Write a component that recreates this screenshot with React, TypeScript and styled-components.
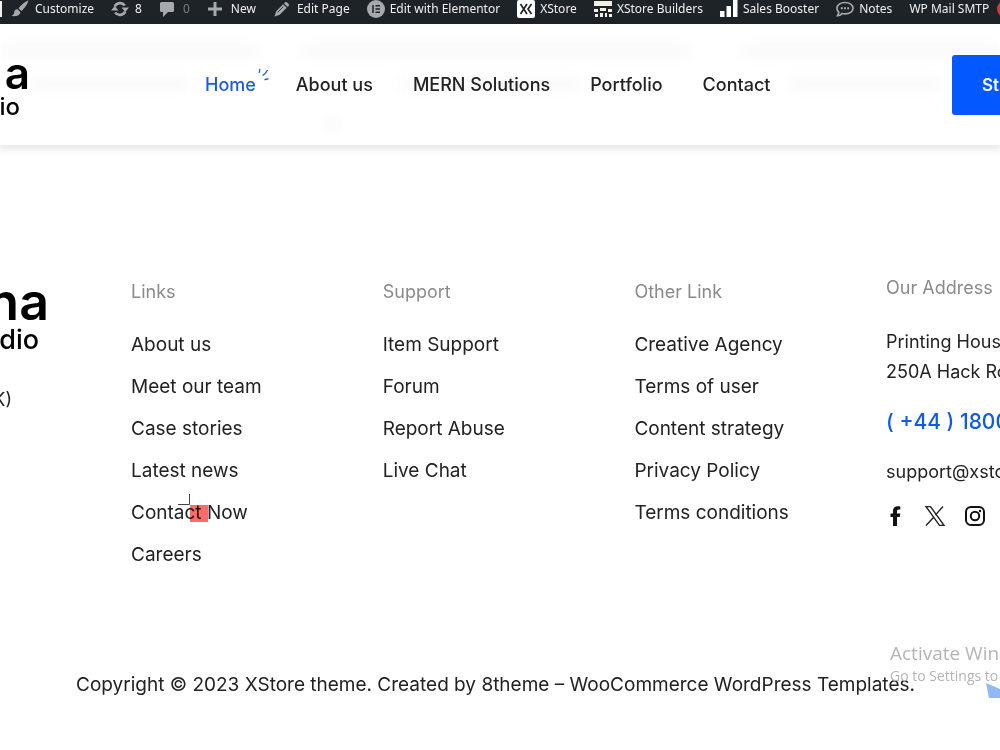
import React from 'react';
import styled, { createGlobalStyle } from 'styled-components';

const Global = createGlobalStyle`
  * { box-sizing: border-box; }
  body { margin: 0; background: #fff; color: #222; font-family: Inter, "Liberation Sans", sans-serif; font-size: 18px; overflow-x: hidden; }
  a { color: inherit; text-decoration: none; }
  ul { list-style: none; margin: 0; padding: 0; }
  h2, p { margin: 0; font-weight: 400; }
`;

const Page = styled.div`
  position: relative;
  overflow: hidden;
  min-height: 100vh;
  display: flex;
  flex-direction: column;
`;

const AdminBar = styled.nav`
  display: flex;
  align-items: center;
  gap: 17px;
  height: 24px;
  padding-bottom: 7px;
  background: #1d2327;
  color: #f0f0f1;
  font: 12px/16px "Noto Sans", "Open Sans", sans-serif;
  white-space: nowrap;
`;

const AdminEdge = styled.span`
  flex: none;
  width: 2px;
  height: 16px;
  margin-right: -8px;
  background: #f0f0f1;
`;

const AdminItem = styled.a<{ $gap?: number; $muted?: boolean }>`
  flex: none;
  display: flex;
  align-items: center;
  gap: ${p => p.$gap ?? 6}px;
  svg { display: block; color: #a7aaad; }
  span { color: ${p => (p.$muted ? '#787c80' : '#f0f0f1')}; }
`;

const Badge = styled.i`
  flex: none;
  width: 18px;
  height: 18px;
  margin-left: -9px;
  border-radius: 9px;
  background: #d63638;
`;

const Header = styled.header`
  position: relative;
  display: flex;
  align-items: center;
  height: 121px;
  background: #fff;
  box-shadow: 0 2px 8px 2px rgba(0, 0, 0, 0.1);
`;

const Ghost = styled.div`
  position: absolute;
  inset: 0;
  overflow: hidden;
  filter: blur(6px);
`;

const GhostBar = styled.i<{ $x: number; $y: number; $w: number }>`
  position: absolute;
  left: ${p => p.$x}%;
  top: ${p => p.$y}px;
  width: ${p => p.$w}%;
  height: 12px;
  background: #f9f9f9;
`;

const Brand = styled.a<{ $width: number; $large?: boolean }>`
  position: relative;
  flex: none;
  display: flex;
  flex-direction: column;
  align-items: flex-end;
  width: ${p => p.$width}px;
  padding-top: ${p => (p.$large ? 0 : 8)}px;
  color: #000;
  font-size: ${p => (p.$large ? 52 : 44)}px;
  line-height: ${p => (p.$large ? 44 : 36)}px;
  font-weight: 600;
  small {
    padding-right: 10px;
    font-size: ${p => (p.$large ? 27 : 24)}px;
    line-height: 32px;
    font-weight: 500;
  }
`;

const Menu = styled.nav`
  position: relative;
  display: flex;
  gap: 40px;
  margin-left: 175px;
  font-size: 18px;
  line-height: 24px;
  font-weight: 500;
  white-space: nowrap;
`;

const MenuLink = styled.a<{ $active?: boolean }>`
  position: relative;
  color: ${p => (p.$active ? '#1a5ce6' : '#222')};
  svg { position: absolute; left: 100%; top: -5px; margin-left: 2px; }
`;

const Cta = styled.button`
  position: relative;
  flex: none;
  margin-left: auto;
  margin-right: -122px;
  width: 170px;
  height: 60px;
  padding: 0 30px;
  border: 0;
  border-radius: 3px;
  background: #0359ff;
  color: #fff;
  font: 600 17px/24px Inter, sans-serif;
  text-align: left;
  white-space: nowrap;
`;

const Footer = styled.footer`
  flex: 1;
  padding-top: 131px;
`;

const Columns = styled.div`
  display: grid;
  grid-template-columns: 13.1% repeat(3, 25.17%) 300px;
  white-space: nowrap;
`;

const Intro = styled.div`
  padding-top: 4px;
`;

const IntroText = styled.p`
  display: flex;
  justify-content: flex-end;
  width: 12px;
  margin-top: 29px;
  line-height: 30px;
`;

const Heading = styled.h2<{ $wide?: boolean }>`
  font-size: 18px;
  line-height: 24px;
  margin-bottom: ${p => (p.$wide ? 27 : 20)}px;
  color: #8a8a8a;
`;

const LinkColumn = styled.div`
  padding-top: 4px;
  li { font-size: 19px; line-height: 42px; }
  li a { position: relative; }
`;

const Pointer = styled.svg`
  position: absolute;
  left: 47px;
  top: -7px;
  mix-blend-mode: multiply;
`;

const Address = styled.address`
  font-style: normal;
  line-height: 30px;
`;

const Phone = styled.a`
  display: block;
  margin: 20px 0;
  font-size: 21px;
  line-height: 30px;
  font-weight: 500;
  color: #0d5be8;
`;

const Social = styled.div`
  display: flex;
  gap: 18px;
  padding-top: 18px;
  a { display: block; height: 22px; }
  svg { display: block; }
`;

const Copyright = styled.p`
  margin: 97px 76px 0;
  font-size: 19px;
  line-height: 24px;
  white-space: nowrap;
`;

const Watermark = styled.div`
  position: absolute;
  left: 89%;
  top: 641px;
  color: #b4b4b4;
  white-space: nowrap;
  font: 14px/20px "Open Sans", "Noto Sans", sans-serif;
  strong { display: block; font-size: 19px; line-height: 25px; font-weight: 400; }
`;

const Bird = styled.svg`
  position: absolute;
  right: 0;
  top: 682px;
`;

const BrushIcon = () => (
  <svg width="18" height="18" viewBox="0 0 18 18" fill="currentColor">
    <path d="M17.500 .5C15 1 10 5 7.600 8.400l2.800 2.700C13.700 8.300 17 3 17.500.5zM6.600 9.300C4.200 9 3.300 10.800 3.200 12.500 3.100 14 2 15 .5 15.800c3.500 1 8.300.2 8.900-3.500z" />
  </svg>
);
const UpdateIcon = () => (
  <svg width="18" height="18" viewBox="0 0 18 18" fill="none" stroke="currentColor" strokeWidth="2.600">
    <path d="M3.800 6.500A5.800 5.800 0 0 1 13.800 5.500M14.200 11.500A5.800 5.800 0 0 1 4.200 12.500" />
    <path d="M0 10.500h7.500L3.700 6zM10.500 7.500H18L14.300 12z" fill="currentColor" stroke="none" />
  </svg>
);
const CommentIcon = () => (
  <svg width="16" height="18" viewBox="0 0 16 18" fill="currentColor">
    <path d="M2.500 2h11A1.500 1.500 0 0 1 15 3.500v7a1.500 1.500 0 0 1-1.500 1.500H9l-5 5v-5H2.500A1.500 1.500 0 0 1 1 10.500v-7A1.500 1.500 0 0 1 2.500 2z" />
  </svg>
);
const PlusIcon = () => (
  <svg width="16" height="18" viewBox="0 0 16 18" fill="currentColor"><path d="M6.500 2h3v5.500H15v3H9.500V16h-3v-5.500H1v-3h5.500z" /></svg>
);
const PencilIcon = () => (
  <svg width="18" height="18" viewBox="0 0 18 18" fill="currentColor">
    <path d="M12.200 2.200c1.200-1.200 4.800 2.200 3.600 3.500l-1.100 1.200-3.700-3.500zM10.100 4.300l3.600 3.500-7 7L1.500 16.500l1.700-5.300z" />
    <path d="M4.500 12.500l6-6" stroke="#1d2327" strokeWidth="0.800" />
  </svg>
);
const ElementorIcon = () => (
  <svg width="18" height="18" viewBox="0 0 18 18">
    <circle cx="9" cy="9" r="9" fill="currentColor" />
    <path d="M6 5v8M8.500 5.700H13M8.500 9H13M8.500 12.300H13" stroke="#1d2327" strokeWidth="1.500" />
  </svg>
);
const StoreIcon = () => (
  <svg width="18" height="18" viewBox="0 0 18 18">
    <rect width="18" height="18" rx="2" fill="#fff" />
    <path d="M3.500 4l6.500 10M10 4L3.500 14M14.500 4L11 9l3.500 5" fill="none" stroke="#1d2327" strokeWidth="1.700" />
  </svg>
);
const BuildersIcon = () => (
  <svg width="18" height="18" viewBox="0 0 18 18" fill="#f0f0e4">
    <path d="M0 1h18v5H0zM0 9h4v3H0zM6 8h6v3H6zM14 9h4v3h-4zM1 14h3v3H1zM6 13h3v4H6zM11 13h2v4h-2zM15 14h3v3h-3z" />
  </svg>
);
const BoosterIcon = () => (
  <svg width="18" height="18" viewBox="0 0 18 18" fill="#fff"><path d="M0 11h4.500v6H0zM6.500 6H11v11H6.500zM13 0h4.500v17H13z" /></svg>
);
const NotesIcon = () => (
  <svg width="18" height="18" viewBox="0 0 18 18" fill="none" stroke="currentColor" strokeWidth="1.700">
    <path d="M9 2.500c4.500 0 8 2.300 8 5.700s-3.500 5.700-8 5.700c-1 0-2-.1-2.900-.4C5 14.800 3.300 15.700 1.500 15.700c.8-1 1.200-2.200 1.200-3.500C1.600 11.100 1 9.700 1 8.200 1 4.800 4.500 2.500 9 2.500z" />
    <path d="M4.800 8.300h2M8 8.300h2M11.200 8.300h2" strokeWidth="2" />
  </svg>
);

const adminItems: { label: string; icon?: React.ReactNode; gap?: number; muted?: boolean }[] = [
  { label: 'Customize', icon: <BrushIcon /> },
  { label: '8', icon: <UpdateIcon /> },
  { label: '0', icon: <CommentIcon />, gap: 8, muted: true },
  { label: 'New', icon: <PlusIcon />, gap: 8 },
  { label: 'Edit Page', icon: <PencilIcon /> },
  { label: 'Edit with Elementor', icon: <ElementorIcon />, gap: 5 },
  { label: 'XStore', icon: <StoreIcon />, gap: 5 },
  { label: 'XStore Builders', icon: <BuildersIcon />, gap: 5 },
  { label: 'Sales Booster', icon: <BoosterIcon />, gap: 5 },
  { label: 'Notes', icon: <NotesIcon />, gap: 5 },
  { label: 'WP Mail SMTP' },
];

const columns = [
  { title: 'Links', links: ['About us', 'Meet our team', 'Case stories', 'Latest news', 'Contact Now', 'Careers'] },
  { title: 'Support', links: ['Item Support', 'Forum', 'Report Abuse', 'Live Chat'] },
  { title: 'Other Link', links: ['Creative Agency', 'Terms of user', 'Content strategy', 'Privacy Policy', 'Terms conditions'] },
];

const ghosts = [
  [0, 21, 26], [30, 21, 39], [74, 21, 26], [3, 54, 16], [40, 54, 18], [79, 54, 15], [32.5, 94, 1.5],
];

export default function App() {
  return (
    <Page>
      <Global />
      <AdminBar aria-label="Admin">
        <AdminEdge />
        {adminItems.map(item => (
          <AdminItem key={item.label} href="#" $gap={item.gap} $muted={item.muted}>
            {item.icon}
            <span>{item.label}</span>
          </AdminItem>
        ))}
        <Badge />
      </AdminBar>

      <Header>
        <Ghost aria-hidden="true">
          {ghosts.map(([x, y, w]) => <GhostBar key={`${x}-${y}`} $x={x} $y={y} $w={w} />)}
        </Ghost>
        <Brand href="#" $width={30}>a<small>io</small></Brand>
        <Menu aria-label="Main">
          <MenuLink href="#" $active>
            Home
            <svg width="12" height="14" viewBox="0 0 12 14" fill="none" stroke="#1a5ce6" strokeWidth="1.300">
              <path d="M1.500 1q.7 2-.5 4M9.500 2Q8 5.500 4.500 7.500M6.500 12q2-1.500 4-.8" />
            </svg>
          </MenuLink>
          <MenuLink href="#">About us</MenuLink>
          <MenuLink href="#">MERN Solutions</MenuLink>
          <MenuLink href="#">Portfolio</MenuLink>
          <MenuLink href="#">Contact</MenuLink>
        </Menu>
        <Cta type="button">Start Project</Cta>
      </Header>

      <Footer>
        <Columns>
          <Intro>
            <Brand href="#" $width={49} $large>na<small>dio</small></Brand>
            <IntroText>(UK)</IntroText>
          </Intro>
          {columns.map(col => (
            <LinkColumn key={col.title}>
              <Heading>{col.title}</Heading>
              <ul>
                {col.links.map(link => (
                  <li key={link}>
                    <a href="#">
                      {link}
                      {link === 'Contact Now' && (
                        <Pointer width="30" height="30" viewBox="0 0 30 30">
                          <rect x="12" y="11" width="18" height="17" fill="#ff6b6b" />
                          <path d="M0 10.500h11.500V0" fill="none" stroke="#444" />
                        </Pointer>
                      )}
                    </a>
                  </li>
                ))}
              </ul>
            </LinkColumn>
          ))}
          <Address>
            <Heading $wide>Our Address</Heading>
            <p>Printing House</p>
            <p>250A Hack Road</p>
            <Phone href="#">( +44 ) 1800</Phone>
            <a href="#">support@xstore.com</a>
            <Social>
              <a href="#" aria-label="Facebook">
                <svg width="20" height="22" viewBox="0 0 20 22"><path d="M7 21V12H4.500V8.500H7V6c0-3.200 1.700-4.800 4.700-4.800 1.300 0 2.600.2 2.600.2v3.100h-1.600c-1.300 0-1.700.8-1.700 1.600v2.400h3.300L13.800 12H11v9z" fill="#111" /></svg>
              </a>
              <a href="#" aria-label="X">
                <svg width="22" height="22" viewBox="0 0 22 22" fill="none" stroke="#222" strokeWidth="1.400"><path d="M2 1.600h4.500L20 20.400h-4.500zM19 1.500l-7.700 8.600M9.700 12.200L2 20.500" /></svg>
              </a>
              <a href="#" aria-label="Instagram">
                <svg width="22" height="22" viewBox="0 0 22 22" fill="none" stroke="#111" strokeWidth="2"><rect x="2" y="2" width="18" height="18" rx="5" /><circle cx="11" cy="11" r="4.200" /><circle cx="16" cy="6" r="1.200" fill="#111" stroke="none" /></svg>
              </a>
            </Social>
          </Address>
        </Columns>
        <Copyright>Copyright © 2023 XStore theme. Created by 8theme – WooCommerce WordPress Templates.</Copyright>
      </Footer>

      <Watermark><strong>Activate Windows</strong>Go to Settings to activate Windows.</Watermark>
      <Bird width="14" height="18" viewBox="0 0 14 18" aria-hidden="true"><path d="M0 1l14 6v9H3z" fill="#8fbaf5" /></Bird>
    </Page>
  );
}
